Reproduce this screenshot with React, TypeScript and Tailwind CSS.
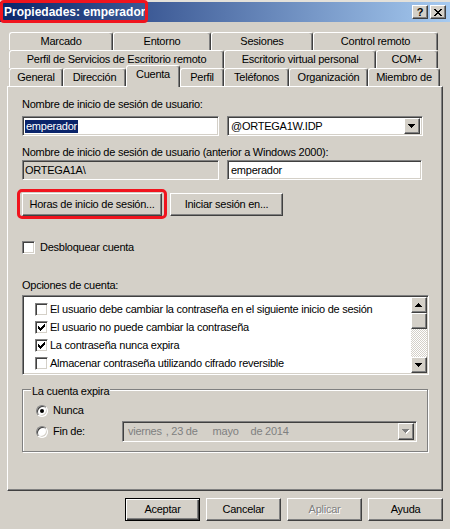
import React from "react";

const raised =
  "border border-t-white border-l-white border-r-[#404040] border-b-[#404040] shadow-[inset_-1px_-1px_0_#808080]";
const sunken =
  "border border-t-[#808080] border-l-[#808080] border-r-white border-b-white shadow-[inset_1px_1px_0_#404040,inset_-1px_-1px_0_#d4d0c8]";

function CheckMark() {
  return (
    <svg width="7" height="7" viewBox="0 0 7 7" shapeRendering="crispEdges">
      <rect x="6" y="0" width="1" height="1" fill="#000" />
      <rect x="5" y="1" width="2" height="1" fill="#000" />
      <rect x="0" y="2" width="1" height="1" fill="#000" />
      <rect x="4" y="2" width="3" height="1" fill="#000" />
      <rect x="0" y="3" width="2" height="1" fill="#000" />
      <rect x="3" y="3" width="3" height="1" fill="#000" />
      <rect x="0" y="4" width="5" height="1" fill="#000" />
      <rect x="1" y="5" width="3" height="1" fill="#000" />
      <rect x="2" y="6" width="1" height="1" fill="#000" />
    </svg>
  );
}

function Check({ checked }: { checked?: boolean }) {
  return (
    <div className={`w-[13px] h-[13px] shrink-0 bg-white ${sunken} flex items-center justify-center`}>
      {checked && <CheckMark />}
    </div>
  );
}

function Radio({ on }: { on?: boolean }) {
  return (
    <div className="w-[12px] h-[12px] shrink-0 rounded-full bg-white border border-t-[#808080] border-l-[#808080] border-r-white border-b-white shadow-[inset_1px_1px_0_#404040,inset_-1px_-1px_0_#d4d0c8] flex items-center justify-center">
      {on && <div className="w-[4px] h-[4px] rounded-full bg-black" />}
    </div>
  );
}

function Tri({ up, color = "#000", shadow }: { up?: boolean; color?: string; shadow?: boolean }) {
  const rows = up
    ? [
        [3, 1],
        [2, 3],
        [1, 5],
        [0, 7],
      ]
    : [
        [0, 7],
        [1, 5],
        [2, 3],
        [3, 1],
      ];
  return (
    <svg width="8" height="5" viewBox="0 0 8 5" shapeRendering="crispEdges">
      {shadow &&
        rows.map(([x, w], i) => <rect key={"s" + i} x={x + 1} y={i + 1} width={w} height={1} fill="#fff" />)}
      {rows.map(([x, w], i) => (
        <rect key={i} x={x} y={i} width={w} height={1} fill={color} />
      ))}
    </svg>
  );
}

function CloseGlyph() {
  const rows = [
    [
      [0, 2],
      [6, 2],
    ],
    [
      [1, 2],
      [5, 2],
    ],
    [[2, 4]],
    [[3, 2]],
    [[2, 4]],
    [
      [1, 2],
      [5, 2],
    ],
    [
      [0, 2],
      [6, 2],
    ],
  ];
  return (
    <svg width="8" height="7" viewBox="0 0 8 7" shapeRendering="crispEdges">
      {rows.map((r, y) => r.map(([x, w], j) => <rect key={y + "-" + j} x={x} y={y} width={w} height={1} fill="#000" />))}
    </svg>
  );
}

type TabDef = { label: string; w: string; sel?: boolean };

const row1: TabDef[] = [
  { label: "Marcado", w: "w-[104px]" },
  { label: "Entorno", w: "w-[98px]" },
  { label: "Sesiones", w: "w-[102px]" },
  { label: "Control remoto", w: "w-[125px]" },
];
const row2: TabDef[] = [
  { label: "Perfil de Servicios de Escritorio remoto", w: "w-[215px]" },
  { label: "Escritorio virtual personal", w: "w-[152px]" },
  { label: "COM+", w: "w-[62px]" },
];
const row3: TabDef[] = [
  { label: "General", w: "w-[54px]" },
  { label: "Dirección", w: "w-[63px]" },
  { label: "Cuenta", w: "w-[54px]", sel: true },
  { label: "Perfil", w: "w-[44px]" },
  { label: "Teléfonos", w: "w-[65px]" },
  { label: "Organización", w: "w-[79px]" },
  { label: "Miembro de", w: "w-[72px]" },
];

const tabBase =
  "shrink-0 flex justify-center border-l border-t border-r border-l-white border-t-white border-r-[#404040] rounded-tl-[3px] rounded-tr-[3px] shadow-[inset_-1px_0_0_#808080] whitespace-nowrap";

function Tab({ t }: { t: TabDef }) {
  if (t.sel) {
    return (
      <div className={`${tabBase} ${t.w} h-[22px] -mb-[1px] pt-[2px] items-start relative z-10 bg-[#d4d0c8]`}>
        {t.label}
      </div>
    );
  }
  return <div className={`${tabBase} ${t.w} h-[18px] items-center`}>{t.label}</div>;
}

function Button({ children, className = "", def, disabled }: { children: React.ReactNode; className?: string; def?: boolean; disabled?: boolean }) {
  const cls = def
    ? "border border-black shadow-[inset_1px_1px_0_#fff,inset_-1px_-1px_0_#404040,inset_-2px_-2px_0_#808080]"
    : raised;
  return (
    <div className={`h-[23px] shrink-0 flex items-center justify-center bg-[#d4d0c8] ${cls} ${className}`}>
      {disabled ? (
        <span className="text-[#808080] [text-shadow:1px_1px_0_#fff]">{children}</span>
      ) : (
        children
      )}
    </div>
  );
}

export default function App() {
  return (
    <div className="w-[450px] h-[529px] bg-[#d4d0c8] font-['Liberation_Sans',Arial,sans-serif] text-[11px] tracking-[-0.25px] leading-[13px] text-black overflow-hidden flex flex-col select-none">
      {/* Title bar */}
      <div className="relative h-[22px] shrink-0 flex items-center bg-[linear-gradient(to_right,#0a246a,#a6caf0)] border-t-[2px] border-t-[#e4e1da]">
        <span className="pl-[4px] text-white font-bold text-[12px] tracking-normal">Propiedades: emperador</span>
        <div className="ml-auto mr-[4px] flex gap-[2px]">
          <div className={`w-[16px] h-[14px] ${raised} bg-[#d4d0c8] flex items-center justify-center font-bold text-[11px] tracking-normal leading-none`}>
            ?
          </div>
          <div className={`w-[16px] h-[14px] ${raised} bg-[#d4d0c8] flex items-center justify-center`}>
            <CloseGlyph />
          </div>
        </div>
        <div className="absolute left-0 -top-[2px] w-[148px] h-[23px] border-[3px] border-[#f0141e] rounded-[4px]" />
      </div>

      {/* Tabs */}
      <div className="mt-[10px] flex flex-col pl-[9px]">
        <div className="flex h-[18px]">
          {row1.map((t) => (
            <Tab key={t.label} t={t} />
          ))}
        </div>
        <div className="flex h-[18px]">
          {row2.map((t) => (
            <Tab key={t.label} t={t} />
          ))}
        </div>
        <div className="flex items-end h-[21px] -mt-[3px] relative z-10">
          {row3.map((t) => (
            <Tab key={t.label} t={t} />
          ))}
        </div>
      </div>

      {/* Panel */}
      <div className="ml-[7px] w-[436px] h-[405px] shrink-0 border border-t-white border-l-white border-r-[#404040] border-b-[#404040] shadow-[inset_-1px_-1px_0_#808080] pl-[14px] flex flex-col">
        <div className="mt-[11px] h-[13px]">Nombre de inicio de sesión de usuario:</div>
        <div className="mt-[5px] flex gap-[8px] h-[20px]">
          <div className={`w-[197px] h-[20px] bg-white ${sunken} flex items-center pl-[2px]`}>
            <span className="bg-[#0a246a] text-white px-[1px] leading-[13px]">emperador</span>
          </div>
          <div className={`w-[196px] h-[20px] bg-white ${sunken} flex items-center pl-[3px] pr-[2px]`}>
            <span className="flex-1">@ORTEGA1W.IDP</span>
            <div className={`w-[16px] h-[16px] ${raised} bg-[#d4d0c8] flex items-center justify-center`}>
              <Tri />
            </div>
          </div>
        </div>
        <div className="mt-[10px] h-[13px] whitespace-nowrap">
          Nombre de inicio de sesión de usuario (anterior a Windows 2000):
        </div>
        <div className="mt-[1px] flex gap-[8px] h-[20px]">
          <div className={`w-[197px] h-[20px] bg-[#d4d0c8] ${sunken} flex items-center pl-[2px]`}>ORTEGA1A\</div>
          <div className={`w-[195px] h-[20px] bg-white ${sunken} flex items-center pl-[3px]`}>emperador</div>
        </div>
        <div className="mt-[13px] flex gap-[8px]">
          <div className="relative">
            <Button className="w-[140px]">Horas de inicio de sesión...</Button>
            <div className="absolute -left-[5px] -right-[5px] -top-[4px] -bottom-[3px] border-[3px] border-[#f0141e] rounded-[5px]" />
          </div>
          <Button className="w-[113px]">Iniciar sesión en...</Button>
        </div>
        <div className="mt-[25px] h-[13px] flex items-center gap-[5px]">
          <Check />
          <span>Desbloquear cuenta</span>
        </div>
        <div className="mt-[25px] h-[13px]">Opciones de cuenta:</div>
        <div className={`mt-[3px] w-[407px] h-[80px] bg-white ${sunken} p-[1px] flex`}>
          <div className="flex-1 pt-[3px] pl-[11px] flex flex-col">
            {[
              ["El usuario debe cambiar la contraseña en el siguiente inicio de sesión", false],
              ["El usuario no puede cambiar la contraseña", true],
              ["La contraseña nunca expira", true],
              ["Almacenar contraseña utilizando cifrado reversible", false],
            ].map(([label, c]) => (
              <div key={label as string} className="h-[18px] flex items-center gap-[2px] whitespace-nowrap">
                <Check checked={c as boolean} />
                <span>{label as string}</span>
              </div>
            ))}
          </div>
          <div className="w-[16px] flex flex-col">
            <div className={`h-[16px] ${raised} bg-[#d4d0c8] flex items-center justify-center`}>
              <Tri up />
            </div>
            <div className={`h-[16px] ${raised} bg-[#d4d0c8]`} />
            <div className="flex-1 bg-[conic-gradient(#fff_25%,#d4d0c8_0_50%,#fff_0_75%,#d4d0c8_0)] bg-[length:2px_2px]" />
            <div className={`h-[16px] ${raised} bg-[#d4d0c8] flex items-center justify-center`}>
              <Tri />
            </div>
          </div>
        </div>

        <fieldset className="mt-[6px] w-[406px] border border-[#808080] shadow-[inset_1px_1px_0_#fff,1px_1px_0_#fff] pb-[9px] pr-[10px]">
          <legend className="ml-[8px] px-[1px] pt-[4px] leading-[13px] bg-[#d4d0c8]">La cuenta expira</legend>
          <div className="mt-[6px] pl-[13px] h-[13px] flex items-center">
            <Radio on />
            <span className="ml-[5px]">Nunca</span>
          </div>
          <div className="mt-[4px] pl-[13px] h-[21px] flex items-center">
            <Radio />
            <span className="ml-[5px]">Fin de:</span>
            <div className={`ml-auto w-[295px] h-[21px] bg-[#d4d0c8] ${sunken} flex items-center pl-[5px] pr-[2px] text-[#808080] whitespace-pre`}>
              <span>viernes</span>
              <span className="ml-[4px]">, 23 de</span>
              <span className="ml-[15px]">mayo</span>
              <span className="ml-[12px]">de 2014</span>
              <div className={`ml-auto w-[16px] h-[17px] ${raised} bg-[#d4d0c8] flex items-center justify-center`}>
                <Tri color="#808080" shadow />
              </div>
            </div>
          </div>
        </fieldset>
      </div>

      {/* Bottom buttons */}
      <div className="mt-[7px] flex justify-end gap-[6px] pr-[7px]">
        <Button def className="w-[75px]">Aceptar</Button>
        <Button className="w-[75px]">Cancelar</Button>
        <Button disabled className="w-[75px]">Aplicar</Button>
        <Button className="w-[75px]">Ayuda</Button>
      </div>
    </div>
  );
}
